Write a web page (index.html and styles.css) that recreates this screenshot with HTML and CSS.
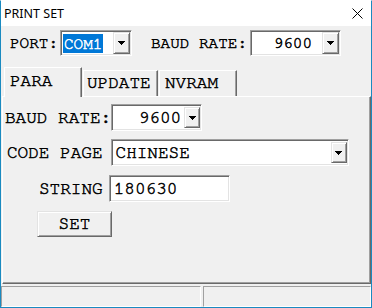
FILE: index.html
```html
<!DOCTYPE html>
<html>
<head>
<meta charset="utf-8">
<link rel="stylesheet" href="styles.css">
</head>
<body>
<div class="window">
  <div class="titlebar">
    <span class="title">PRINT SET</span>
    <svg class="close" width="11" height="11" viewBox="0 0 11 11"><path d="M0.5 0.5 L10.5 10.5 M10.5 0.5 L0.5 10.5" stroke="#000" stroke-width="1" fill="none"/></svg>
  </div>
  <div class="client">
    <div class="toprow">
      <span class="lbl">PORT:</span>
      <div class="combo combo-port">
        <span class="sel">COM1</span>
        <span class="dd"><svg width="7" height="4" viewBox="0 0 7 4"><polygon points="0,0 7,0 3.5,4" fill="#000"/></svg></span>
      </div>
      <span class="lbl lbl-baud">BAUD RATE:</span>
      <div class="combo combo-baud">
        <span class="val val-right">9600</span>
        <span class="dd"><svg width="7" height="4" viewBox="0 0 7 4"><polygon points="0,0 7,0 3.5,4" fill="#000"/></svg></span>
      </div>
    </div>
    <div class="tabs">
      <div class="tab tab-active">PARA</div>
      <div class="tab tab-update">UPDATE</div>
      <div class="tab tab-nvram">NVRAM</div>
    </div>
    <div class="panel">
      <div class="row r1">
        <span class="plbl">BAUD RATE:</span>
        <div class="combo combo-pbaud">
          <span class="pval pval-right">9600</span>
          <span class="dd dd-p"><svg width="7" height="4" viewBox="0 0 7 4"><polygon points="0,0 7,0 3.5,4" fill="#000"/></svg></span>
        </div>
      </div>
      <div class="row r2">
        <span class="plbl">CODE PAGE</span>
        <div class="combo combo-code">
          <span class="pval pval-left">CHINESE</span>
          <span class="dd dd-p"><svg width="7" height="4" viewBox="0 0 7 4"><polygon points="0,0 7,0 3.5,4" fill="#000"/></svg></span>
        </div>
      </div>
      <div class="row r3">
        <span class="plbl">STRING</span>
        <div class="combo textbox"><span class="pval pval-left">180630</span></div>
      </div>
      <div class="row r4">
        <div class="btn">SET</div>
      </div>
    </div>
    <div class="status">
      <div class="pane pane1"></div>
      <div class="pane pane2"></div>
    </div>
  </div>
</div>
</body>
</html>
```
FILE: styles.css
```css
html, body {
  margin: 0;
  padding: 0;
  background: #fff;
}
.window {
  width: 372px;
  height: 308px;
  box-sizing: border-box;
  border: 1px solid #1a8ac0;
  border-top-color: #fff;
  display: flex;
  flex-direction: column;
  background: #f0f0f0;
}
.titlebar {
  height: 25px;
  flex-shrink: 0;
  background: #fff;
  display: flex;
  align-items: center;
  padding-left: 3px;
}
.title {
  font-family: "Noto Sans", "Open Sans", sans-serif;
  font-size: 12.5px;
  color: #000;
  line-height: 15px;
}
.close {
  margin-left: auto;
  margin-right: 8px;
  display: block;
}
.client {
  flex: 1;
  display: flex;
  flex-direction: column;
  font-family: FreeMono, "Courier New", "Liberation Mono", monospace;
  color: #000;
  -webkit-text-stroke: 0.5px #000;
}
.toprow {
  margin-top: 4px;
  height: 26px;
  display: flex;
  align-items: center;
  padding-left: 9px;
  font-size: 16px;
}
.lbl {
  white-space: nowrap;
  line-height: 18px;
}
.lbl-baud {
  margin-left: 19px;
}
.combo {
  box-sizing: border-box;
  border: 1px solid;
  border-color: #a0a0a0 #fff #fff #a0a0a0;
  box-shadow: inset 1px 1px #696969, inset -1px -1px #e3e3e3;
  background: #fff;
  display: flex;
  align-items: center;
  padding: 1px;
  flex-shrink: 0;
}
.combo-port {
  width: 72px;
  height: 26px;
  margin-left: 2px;
}
.combo-baud {
  width: 91px;
  height: 26px;
  margin-left: 3px;
}
.sel {
  margin-left: 1px;
  background: #0078d7;
  color: #fff;
  -webkit-text-stroke: 0.5px #fff;
  padding: 0 1px;
  height: 19px;
  line-height: 20px;
}
.val {
  flex: 1;
  line-height: 19px;
}
.val-right {
  text-align: right;
  padding-right: 10px;
}
.dd {
  margin-left: auto;
  width: 17px;
  align-self: stretch;
  box-sizing: border-box;
  background: #f0f0f0;
  border: 1px solid;
  border-color: #e3e3e3 #696969 #696969 #e3e3e3;
  box-shadow: inset 1px 1px #fff, inset -1px -1px #a0a0a0;
  display: flex;
  align-items: center;
  justify-content: center;
}
.dd svg {
  display: block;
  shape-rendering: crispEdges;
}
.dd-p {
  width: 16px;
  margin-top: 1px;
  margin-bottom: 1px;
}
.tabs {
  margin-top: 11px;
  height: 29px;
  display: flex;
  align-items: flex-end;
  padding-left: 3px;
  font-size: 17.7px;
}
.tab {
  box-sizing: border-box;
  height: 26px;
  background: #f0f0f0;
  border-top: 1px solid #fff;
  border-left: 1px solid #fff;
  border-right: 1px solid #696969;
  box-shadow: inset -1px 0 #a0a0a0;
  line-height: 20px;
  padding-top: 2px;
  white-space: nowrap;
}
.tab-active {
  width: 78px;
  height: 30px;
  margin-bottom: -1px;
  position: relative;
  z-index: 1;
  padding-left: 5px;
  padding-top: 3px;
}
.tab-update {
  width: 75px;
  margin-left: 1px;
  padding-left: 3px;
}
.tab-nvram {
  width: 78px;
  margin-left: 1px;
  padding-left: 5px;
}
.panel {
  box-sizing: border-box;
  height: 188px;
  margin-left: 1px;
  border: 1px solid;
  border-color: #fff #696969 #696969 #fff;
  box-shadow: inset -1px -1px #a0a0a0;
  padding-top: 7px;
  display: flex;
  flex-direction: column;
  font-size: 17.7px;
}
.row {
  display: flex;
  align-items: center;
}
.plbl {
  white-space: nowrap;
  line-height: 20px;
  flex-shrink: 0;
}
.r1 .plbl { margin-left: 2px; }
.r2 { margin-top: 8px; }
.r2 .plbl { margin-left: 4px; }
.r3 { margin-top: 9px; }
.r3 .plbl { margin-left: 36px; }
.r4 { margin-top: 9px; }
.combo-pbaud {
  width: 91px;
  height: 27px;
}
.combo-code {
  width: 238px;
  height: 27px;
  margin-left: 8px;
}
.textbox {
  width: 121px;
  height: 27px;
  margin-left: 6px;
}
.pval {
  flex: 1;
  line-height: 20px;
  white-space: nowrap;
}
.pval-right {
  text-align: right;
  padding-right: 3px;
}
.pval-left {
  padding-left: 3px;
}
.btn {
  margin-left: 34px;
  width: 75px;
  height: 26px;
  box-sizing: border-box;
  background: #f0f0f0;
  border: 1px solid;
  border-color: #e3e3e3 #696969 #696969 #e3e3e3;
  box-shadow: inset 1px 1px #fff, inset -1px -1px #a0a0a0;
  display: flex;
  align-items: center;
  justify-content: center;
  line-height: 20px;
}
.status {
  margin-top: 2px;
  height: 21px;
  display: flex;
  gap: 2px;
}
.pane {
  box-sizing: border-box;
  height: 21px;
  border: 1px solid;
  border-color: #a0a0a0 #fff #fff #a0a0a0;
}
.pane1 { width: 200px; }
.pane2 { flex: 1; }
```
